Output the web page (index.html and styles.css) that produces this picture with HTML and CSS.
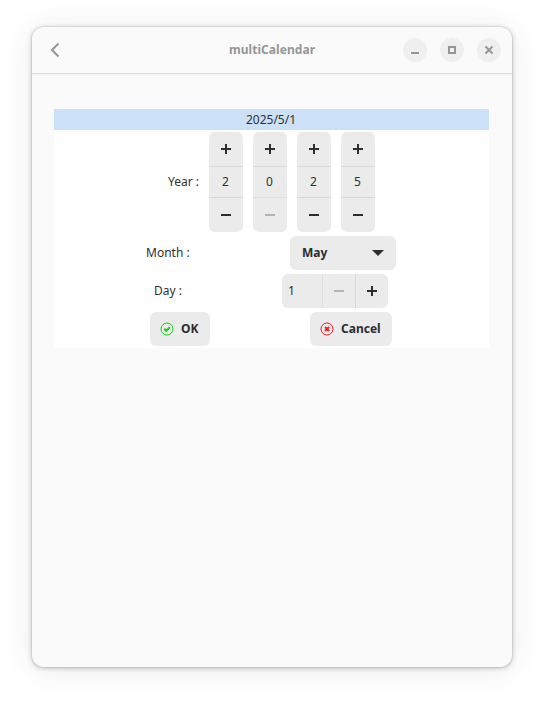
FILE: index.html
```
<!DOCTYPE html>
<html lang="en">
<head>
<meta charset="utf-8">
<title>multiCalendar</title>
<link rel="stylesheet" href="styles.css">
</head>
<body>
<svg class="defs" aria-hidden="true">
  <symbol id="plus" viewBox="0 0 16 16"><path d="M7 3h2v4h4v2H9v4H7V9H3V7h4z"/></symbol>
  <symbol id="minus" viewBox="0 0 16 16"><path d="M3 7h10v2H3z"/></symbol>
</svg>
<main class="window">
  <header class="titlebar">
    <button class="back" aria-label="Back"><svg viewBox="0 0 16 16"><path d="M11.5 1.5 5 8l6.500 6.500"/></svg></button>
    <h1 class="title">multiCalendar</h1>
    <div class="controls">
      <button class="control" aria-label="Minimize"><svg viewBox="0 0 16 16"><path d="M4 10h8v2H4z"/></svg></button>
      <button class="control" aria-label="Maximize"><svg viewBox="0 0 16 16"><path fill-rule="evenodd" d="M4 4h8v8H4zM6 6v4h4V6z"/></svg></button>
      <button class="control" aria-label="Close"><svg viewBox="0 0 16 16"><path class="cross" d="m4.5 4.5 7 7m0-7-7 7"/></svg></button>
    </div>
  </header>
  <section class="panel">
    <div class="date">2025/5/1</div>
    <div class="row year">
      <span class="label">Year :</span>
      <div class="digits">
        <div class="digit"><button><svg><use href="#plus"/></svg></button><span>2</span><button><svg><use href="#minus"/></svg></button></div>
        <div class="digit"><button><svg><use href="#plus"/></svg></button><span class="at-min">0</span><button disabled><svg><use href="#minus"/></svg></button></div>
        <div class="digit"><button><svg><use href="#plus"/></svg></button><span>2</span><button><svg><use href="#minus"/></svg></button></div>
        <div class="digit"><button><svg><use href="#plus"/></svg></button><span>5</span><button><svg><use href="#minus"/></svg></button></div>
      </div>
    </div>
    <div class="row month">
      <span class="label">Month :</span>
      <button class="select">May<svg viewBox="0 0 16 16"><path d="M2 5h12l-6 6z"/></svg></button>
    </div>
    <div class="row day">
      <span class="label">Day :</span>
      <div class="spin"><span>1</span><button disabled><svg><use href="#minus"/></svg></button><button><svg><use href="#plus"/></svg></button></div>
    </div>
    <div class="row actions">
      <button class="action ok"><svg viewBox="0 0 14 14"><circle cx="7" cy="7" r="6"/><path d="m4.200 6.800 2 2 3.600-3.600"/></svg>OK</button>
      <button class="action cancel"><svg viewBox="0 0 14 14"><circle cx="7" cy="7" r="6"/><path d="m5 5 4 4m0-4L5 9"/></svg>Cancel</button>
    </div>
  </section>
</main>
</body>
</html>
```
FILE: styles.css
```
* { box-sizing: border-box; }
body {
  margin: 0;
  padding: 27px 32px;
  height: 702px;
  overflow: hidden;
  background: #fff;
  color: #303030;
  font: 12px/16px "Noto Sans", sans-serif;
}
.defs { display: none; }
button {
  display: flex;
  align-items: center;
  justify-content: center;
  padding: 0;
  border: 0;
  background: none;
  color: #2d2d2d;
  font: inherit;
}
svg { width: 16px; height: 16px; fill: currentColor; flex: none; }

.window {
  width: 480px;
  height: 640px;
  border-radius: 12px;
  background: #fafafa;
  box-shadow: 0 0 0 1px rgba(0,0,0,.05), 0 1px 5px rgba(0,0,0,.25), 0 2px 32px rgba(0,0,0,.09);
}
.titlebar {
  display: grid;
  grid-template-columns: 98px 1fr 98px;
  align-items: center;
  height: 47px;
  padding: 0 11px 0 15px;
  border-bottom: 1px solid #dcdcdc;
  box-shadow: 0 1px 1px rgba(0,0,0,.03);
}
.back { width: 16px; color: #969696; }
.back svg { fill: none; stroke: currentColor; stroke-width: 2; }
.title { margin: 0; padding-right: 4px; color: #969696; font-size: 12px; line-height: 16px; font-weight: 700; letter-spacing: .06px; text-align: center; }
.controls { display: flex; gap: 13px; }
.control { width: 24px; height: 24px; border-radius: 50%; background: #efefef; color: #969696; }
.cross { stroke: currentColor; stroke-width: 2; }

.panel { width: 435px; height: 239px; margin: 35px 0 0 22px; background: #fff; }
.date { height: 21px; margin-bottom: 2px; padding-right: 1px; background: #cce0f8; line-height: 21px; text-align: center; }
.row { display: flex; align-items: center; height: 34px; margin-bottom: 4px; }
.year { height: 100px; padding-left: 114px; }
.year .label { width: 41px; }
.digits { display: flex; gap: 10px; }
.digit {
  display: grid;
  grid-template-rows: 34px 32px 34px;
  width: 34px;
  border-radius: 6px;
  background: #ebebeb;
  text-align: center;
}
.digit span { padding-right: 1px; border: 1px solid #d8d8d8; border-width: 1px 0; line-height: 30px; }
.digit .at-min { border-bottom-color: #e0e0e0; }
button:disabled { color: #b3b3b3; }
.month { padding-left: 92px; }
.month .label { width: 144px; }
.select {
  justify-content: space-between;
  width: 106px;
  height: 34px;
  padding: 0 10px 0 12px;
  border-radius: 6px;
  background: #ebebeb;
  font-weight: 700;
}
.day { padding-left: 100px; }
.day .label { width: 128px; }
.spin {
  display: grid;
  grid-template-columns: 40px 33px 33px;
  height: 34px;
  border-radius: 6px;
  background: #ebebeb;
  line-height: 34px;
}
.spin span { padding-left: 6px; }
.spin button { border-left: 1px solid #d8d8d8; }
.spin button:disabled { border-color: #e0e0e0; }
.actions { gap: 100px; padding-left: 96px; margin: 0; }
.action { justify-content: flex-start; gap: 7px; height: 34px; padding-left: 10px; border-radius: 6px; background: #ebebeb; font-weight: 700; }
.action svg { width: 14px; height: 14px; fill: none; stroke: currentColor; }
.action path { stroke-width: 2; }
.ok { width: 60px; }
.cancel { width: 82px; }
.ok svg { color: #17cf17; }
.cancel svg { color: #f71d1d; }
```
